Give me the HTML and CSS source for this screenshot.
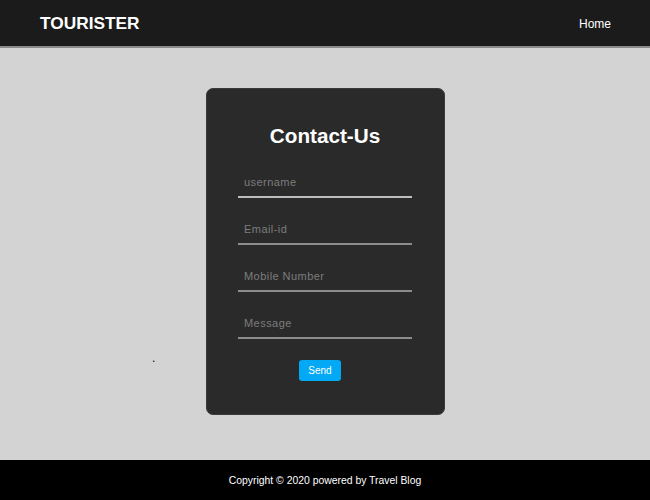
FILE: index.html
```html
<!DOCTYPE html>
<html>
<head>
<meta charset="utf-8">
<link rel="stylesheet" href="styles.css">
</head>
<body>
<header class="topbar">
  <div class="brand">TOURISTER</div>
  <nav class="nav"><a href="#" class="nav-link">Home</a></nav>
</header>
<main class="main">
  <span class="dot">.</span>
  <form class="card">
    <h1 class="card-title">Contact-Us</h1>
    <input class="field field-active" type="text" placeholder="username">
    <input class="field" type="text" placeholder="Email-id">
    <input class="field" type="text" placeholder="Mobile Number">
    <input class="field" type="text" placeholder="Message">
    <button class="send" type="button">Send</button>
  </form>
</main>
<footer class="footer">Copyright © 2020 powered by Travel Blog</footer>
</body>
</html>
```
FILE: styles.css
```css
* { box-sizing: border-box; }
html, body { margin: 0; padding: 0; }
body {
  font-family: "Liberation Sans", Arial, sans-serif;
  background: #d3d3d3;
  width: 650px;
  height: 500px;
  display: flex;
  flex-direction: column;
}
.topbar {
  height: 48px;
  background: #1b1b1b;
  border-bottom: 2px solid #8a8a8a;
  display: flex;
  align-items: center;
  justify-content: space-between;
  padding: 0 39px 0 40px;
}
.brand {
  color: #fff;
  font-weight: bold;
  font-size: 17.3px;
}
.nav-link {
  color: #fff;
  text-decoration: none;
  font-size: 12px;
}
.main {
  flex: 1;
  position: relative;
  display: flex;
  justify-content: center;
  padding-top: 40px;
}
.dot {
  position: absolute;
  left: 152px;
  top: 303px;
  font-size: 12px;
  color: #000;
}
.card {
  width: 239px;
  height: 327px;
  background: #2a2a2a;
  border-radius: 7px;
  border: 1px solid #3a3a3a;
  display: flex;
  flex-direction: column;
  align-items: center;
  padding-top: 34px;
}
.card-title {
  margin: 0 0 19px;
  color: #fff;
  font-size: 20.7px;
  font-weight: bold;
  line-height: 26px;
}
.field {
  width: 174px;
  height: 30px;
  background: transparent;
  border: none;
  border-bottom: 2px solid #8c8c8c;
  outline: none;
  padding: 0 6px;
  margin-bottom: 17px;
  font-family: "Liberation Sans", Arial, sans-serif;
  font-size: 11px;
  letter-spacing: 0.45px;
  color: #ccc;
}
.field-active { border-bottom-color: #bdbdbd; }
.field::placeholder { color: #7d7d7d; }
.send {
  margin-top: 4px;
  margin-right: 10px;
  width: 42px;
  height: 21px;
  background: #03a9f4;
  color: #fff;
  border: none;
  border-radius: 3px;
  font-family: "Liberation Sans", Arial, sans-serif;
  font-size: 10px;
  padding: 0;
}
.footer {
  height: 40px;
  background: #000;
  color: #fff;
  font-size: 10.4px;
  display: flex;
  align-items: center;
  justify-content: center;
}
```
